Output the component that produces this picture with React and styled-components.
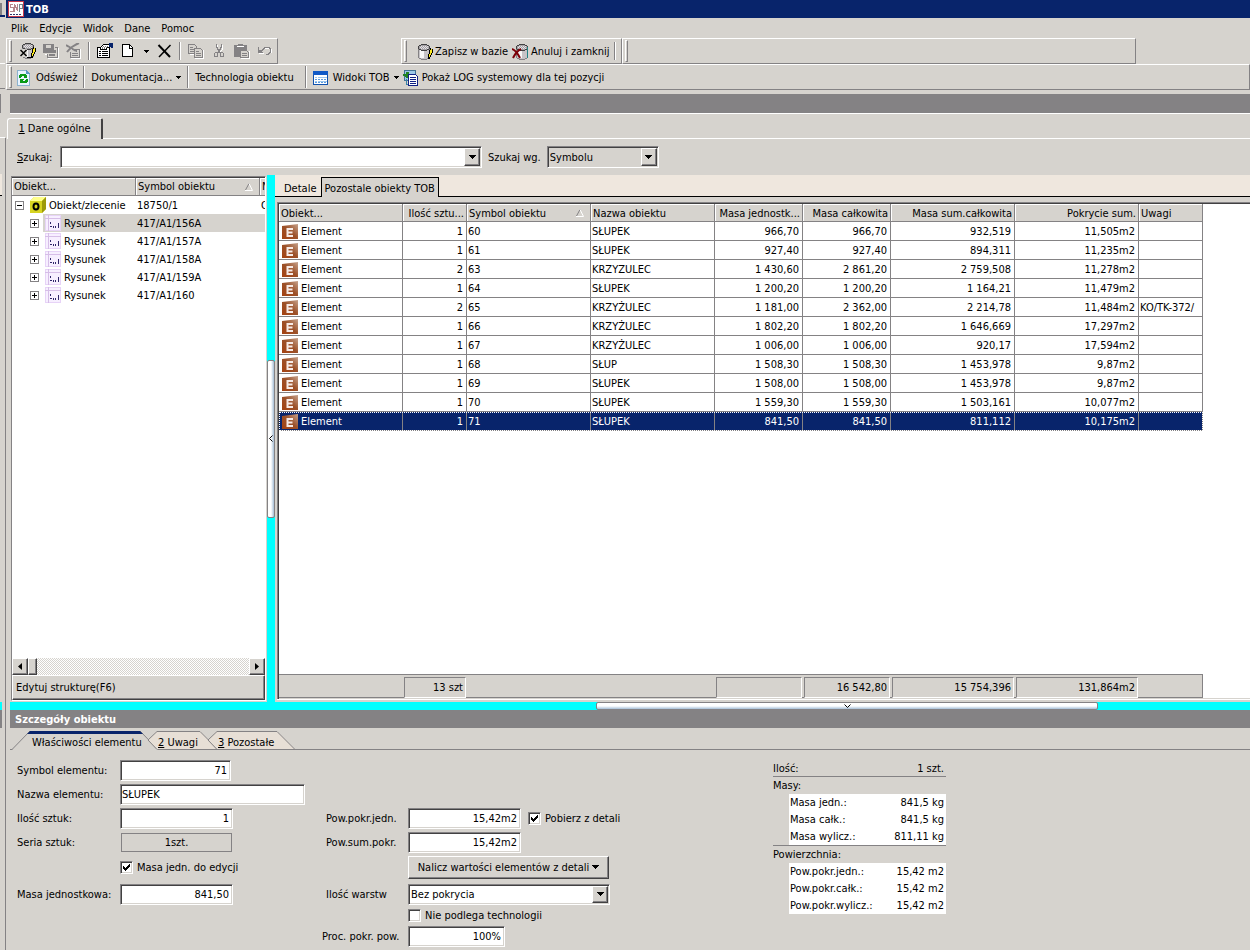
import React from 'react';
import styled, {createGlobalStyle, css} from "styled-components";

const GlobalStyle = createGlobalStyle`
  * {
    box-sizing: border-box;
  }

  body {
    margin: 0;
    background: #d6d3ce;
    overflow: hidden;
  }

  body, button, input, select, table {
    font-family: "DejaVu Sans Condensed", Tahoma, sans-serif;
    font-size: 11px;
    line-height: 17px;
    color: #000;
  }

  button {
    padding: 0;
    border: 0;
    background: none;
    white-space: nowrap;
  }

  svg {
    display: block;
    flex: none;
  }
`;

const sunken = css`
  border: 1px solid;
  border-color: #848284 #fff #fff #848284;
  box-shadow: inset 1px 1px #424142, inset -1px -1px #d6d3ce;
`;

const raised = css`
  border: 1px solid;
  border-color: #fff #424142 #424142 #fff;
  box-shadow: inset -1px -1px #848284;
  background: #d6d3ce;
`;

/* ---------- window ---------- */

const Desktop = styled.div`
  display: flex;
  height: 100vh;
  min-height: 900px;
`;

const BackWindow = styled.div`
  display: flex;
  flex-direction: column;
  flex: none;
  width: 6px;
  background: linear-gradient(#848284, #848284) right 138px / 1px 100% no-repeat;
`;

const BackPart = styled.div`
  height: ${(props) => props.$height}px;
  width: ${(props) => props.$width || 2}px;
  background: ${(props) => props.$color || "transparent"};
  flex: ${(props) => props.$grow ? 1 : "none"};
`;

const Window = styled.div`
  display: flex;
  flex-direction: column;
  flex: 1;
  min-width: 0;
`;

const TitleBar = styled.header`
  display: flex;
  align-items: center;
  gap: 2px;
  height: 18px;
  padding-left: 2px;
  background: #08246b;
  color: #fff;
  font-weight: bold;
`;

const MenuBar = styled.nav`
  display: flex;
  align-items: center;
  gap: 11px;
  height: 20px;
  padding: 1px 0 0 5px;
`;

const ToolRow = styled.div`
  display: flex;
  height: 26px;
`;

const ToolBar = styled.div`
  display: flex;
  align-items: center;
  height: 26px;
  padding-left: 2px;
  margin-left: ${(props) => props.$left || 0}px;
  border: 1px solid;
  border-color: #fff #848284 #848284 #fff;
  flex: ${(props) => props.$grow ? 1 : "none"};
  width: ${(props) => props.$width ? props.$width + "px" : "auto"};
`;

const Grip = styled.span`
  width: 3px;
  height: 22px;
  margin-right: ${(props) => props.$space || 4}px;
  border: 1px solid;
  border-color: #fff #848284 #848284 #fff;
`;

const Separator = styled.span`
  width: 2px;
  height: ${(props) => props.$tall ? 22 : 18}px;
  margin: 0 ${(props) => props.$tall ? 4 : 3}px 0 ${(props) => props.$space || 3}px;
  border-left: 1px solid #848284;
  border-right: 1px solid #fff;
`;

const IconButton = styled.button`
  display: flex;
  align-items: center;
  justify-content: center;
  width: ${(props) => props.$narrow ? 14 : 23}px;
  height: 22px;
`;

const ToolButton = styled.button`
  display: flex;
  align-items: center;
  gap: ${(props) => props.$gap || 3}px;
  height: 23px;
  padding: 1px 2px 0;
`;

const GrayBand = styled.div`
  height: 20px;
  margin: 4px 0 4px 4px;
  background: #848284;
  border-bottom: 1px solid #fff;
`;

const PageTabs = styled.div`
  display: flex;
  height: 21px;

  &::after {
    content: "";
    flex: 1;
    border-bottom: 1px solid #fff;
  }
`;

const PageTab = styled.button`
  width: 96px;
  margin-left: 1px;
  padding-bottom: 2px;
  border-top: 1px solid #fff;
  border-left: 1px solid #fff;
  border-right: 2px solid #424142;
  border-radius: 3px 2px 0 0;
`;

const SearchRow = styled.div`
  display: flex;
  align-items: center;
  gap: 6px;
  height: 36px;
  padding-left: 11px;
`;

const SearchLabel = styled.label`
  min-width: 37px;
`;

const Combo = styled.span`
  ${sunken}
  display: flex;
  position: relative;
  width: ${(props) => props.$width}px;
  height: ${(props) => props.$height || 22}px;
  padding: 1px;
  background: ${(props) => props.$gray ? "#d6d3ce" : "#fff"};

  input, select {
    flex: 1;
    min-width: 0;
    padding: 0 18px 0 1px;
    border: 0;
    background: none;
    outline: 0;
    appearance: none;
  }
`;

/* the arrow lies over the right end of the field */
const ComboArrow = styled.span`
  ${raised}
  position: absolute;
  top: 1px;
  right: 1px;
  bottom: 1px;
  display: flex;
  align-items: center;
  justify-content: center;
  width: 16px;
  pointer-events: none;
`;

/* ---------- tree ---------- */

const Workspace = styled.main`
  display: flex;
  flex: 1;
  min-height: 0;
  margin-left: 5px;
`;

const TreePanel = styled.section`
  display: flex;
  flex-direction: column;
  flex: none;
  width: 255px;
  margin: 1px 1px 1px 0;
  border: 1px solid;
  border-color: #848284 #fff #fff #848284;
  box-shadow: inset 0 1px #424142;
  padding-top: 1px;
`;

const TreeScroll = styled.div`
  flex: 1;
  overflow: hidden;
  background: #fff;
`;

const TreeTable = styled.table`
  width: 100%;
  table-layout: fixed;
  border-collapse: separate;
  border-spacing: 0;

  th {
    height: 18px;
    padding: 0 2px;
    background: #d6d3ce;
    border-bottom: 1px solid #848284;
    border-right: 1px solid #848284;
    box-shadow: inset 1px 1px #fff;
    font-weight: normal;
    text-align: left;
    overflow: hidden;
  }

  th:last-child {
    padding-right: 0;
    border-right: 0;
  }

  td {
    height: 18px;
    padding: 0 1px;
    white-space: nowrap;
    overflow: hidden;
  }
`;

const HeadCell = styled.span`
  display: flex;
  align-items: center;
  justify-content: ${(props) => props.$right ? "flex-end" : "space-between"};
  height: 17px;
  padding-right: ${(props) => props.$sort ? 4 : 0}px;
  white-space: nowrap;
  overflow: hidden;
`;

const TreeNode = styled.span`
  display: flex;
  align-items: center;
  height: 18px;
  padding-left: ${(props) => props.$level ? 17 : 2}px;
`;

const TreeLabel = styled.span`
  display: flex;
  flex: 1;
  align-items: center;
  gap: 3px;
  height: 18px;
  margin: 0 -1px 0 4px;
  padding-left: 2px;
  background: ${(props) => props.$selected ? "#d6d3ce" : "none"};
`;

const TreeRow = styled.tr`
  td + td {
    background: ${(props) => props.$selected ? "#d6d3ce" : "none"};
  }
`;

const ScrollBar = styled.div`
  display: flex;
  height: 17px;
  background: repeating-conic-gradient(#fff 0 25%, #d6d3ce 0 50%) 0 0 / 2px 2px;
`;

const ScrollButton = styled.button`
  ${raised}
  display: flex;
  align-items: center;
  justify-content: center;
  width: ${(props) => props.$thumb ? 9 : 16}px;
  margin-left: ${(props) => props.$end ? "auto" : "0"};
`;

const TreeFooter = styled.button`
  ${raised}
  height: 25px;
  padding-left: 3px;
  text-align: left;
`;

/* ---------- splitters ---------- */

const SplitterV = styled.div`
  display: flex;
  align-items: center;
  flex: none;
  width: 8px;
  background: #0ff;
`;

const SplitterH = styled.div`
  display: flex;
  flex: none;
  height: 8px;
  margin-left: 4px;
  padding-left: 586px;
  background: #0ff;
`;

const SplitHandle = styled.button`
  display: flex;
  align-items: center;
  justify-content: center;
  width: ${(props) => props.$flat ? 502 : 8}px;
  height: ${(props) => props.$flat ? 8 : 158}px;
  border: 1px solid #848284;
  border-radius: 2px;
  background: linear-gradient(${(props) => props.$flat ? "to bottom" : "to right"}, #fff 50%, #a5bed6);
`;

/* ---------- objects grid ---------- */

const ObjectsPanel = styled.section`
  display: flex;
  flex-direction: column;
  flex: 1;
  min-width: 0;
`;

const StripTabs = styled.div`
  display: flex;
  height: 22px;
  padding-top: 2px;
  background: linear-gradient(#000, #000) bottom / 100% 1px no-repeat #efe7de;
`;

const StripTab = styled.button`
  padding: ${(props) => props.$active ? "1px 3px 0" : "2px 4px 0 9px"};
  border: solid #000;
  border-width: ${(props) => props.$active ? "1px 1px 0" : "0"};
  background: ${(props) => props.$active ? "#d6d3ce" : "none"};
`;

const GridPanel = styled.div`
  display: flex;
  flex-direction: column;
  flex: 1;
  min-height: 0;
  margin: 5px 0 3px 2px;
  border: solid #848284;
  border-width: 1px 0 0 1px;
  box-shadow: inset 1px 1px #424142, 0 1px #fff;
  padding: 1px 0 1px 1px;
`;

const GridScroll = styled.div`
  flex: 1;
  overflow: hidden;
  background: #fff;
`;

const GridTable = styled.table`
  width: 924px;
  table-layout: fixed;
  border-collapse: separate;
  border-spacing: 0;

  th {
    height: 18px;
    padding: 0 2px;
    background: #d6d3ce;
    border-right: 1px solid #848284;
    border-bottom: 1px solid #848284;
    box-shadow: inset 1px 1px #fff;
    font-weight: normal;
  }

  th span {
    padding-top: 1px;
  }

  td {
    height: 19px;
    padding: 1px 3px 0 1px;
    border-right: 1px solid #848284;
    border-bottom: 1px solid #848284;
    white-space: nowrap;
    overflow: hidden;
  }
`;

const GridRow = styled.tr`
  background: ${(props) => props.$selected ? "#08246b" : "#fff"};
  color: ${(props) => props.$selected ? "#fff" : "#000"};
  outline: ${(props) => props.$selected ? "1px dotted #fff" : "0"};
  outline-offset: -1px;
`;

const GridCell = styled.td`
  text-align: ${(props) => props.$right ? "right" : "left"};
`;

const Kind = styled.span`
  display: flex;
  align-items: center;
  gap: 3px;
  padding-left: 2px;
`;

const GridFooter = styled.div`
  display: grid;
  grid-template-columns: 124px 64px 124px 124px 88px 88px 124px 124px 63px;
  align-self: flex-start;
  height: 24px;
  padding: 2px 0;
  border: solid #848284;
  border-width: 1px 1px 1px 0;
  background: #d6d3ce;
  box-shadow: 60px 0 #fff;
`;

const FooterCell = styled.span`
  margin: 0 1px;
  padding: 0 2px;
  text-align: right;
  line-height: 19px;
  border: 1px solid;
  border-color: ${(props) => props.$on ? "#848284 #fff #fff #848284" : "transparent"};
`;

/* ---------- details ---------- */

const SectionTitle = styled.h2`
  height: 18px;
  margin: 0 0 2px 4px;
  padding: 1px 0 0 5px;
  background: #848284;
  color: #fff;
  font-size: 11px;
`;

const DetailTabs = styled.div`
  display: flex;
  height: 20px;
  margin-left: 4px;
  padding-left: 2px;
  background: linear-gradient(#848284, #848284) bottom / 100% 1px no-repeat;
`;

const DetailTab = styled.button`
  position: relative;
  width: ${(props) => props.$width}px;
  padding: 4px 0 0 ${(props) => props.$active ? 20 : 10}px;
  margin-right: -10px;
  text-align: left;

  svg {
    position: absolute;
    left: 0;
    top: 0;
  }

  span {
    position: relative;
  }
`;

const Form = styled.form`
  display: grid;
  grid-template-columns: 305px 451px 173px;
  align-items: start;
  height: 200px;
  padding: 8px 0 0 11px;
`;

const Fields = styled.div`
  display: grid;
  grid-template-columns: ${(props) => props.$middle ? "86px auto" : "103px auto"};
  grid-template-rows: 24px 24px 24px 24px 26px 28px 14px 28px;
  align-items: center;
`;

const Label = styled.label`
  grid-column: 1;
  grid-row: ${(props) => props.$row};
  padding-left: ${(props) => props.$indent ? 4 : 0}px;
  white-space: nowrap;
`;

const Field = styled.div`
  grid-column: 2;
  grid-row: ${(props) => props.$row};
  display: flex;
  align-items: center;
  gap: 7px;
`;

const TextBox = styled.input`
  ${sunken}
  width: ${(props) => props.$width}px;
  height: 21px;
  padding: 0 3px 0 1px;
  background: #fff;
  text-align: ${(props) => props.$left ? "left" : "right"};
  outline: 0;
`;

const SeriesButton = styled.button`
  width: 111px;
  height: 19px;
  margin-left: 1px;
  border: 1px solid #848284;
`;

const CheckLabel = styled.label`
  display: flex;
  align-items: center;
  gap: 4px;
  white-space: nowrap;

  input {
    ${sunken}
    appearance: none;
    width: 13px;
    height: 13px;
    margin: 0;
    background: #fff;
  }

  input:checked {
    background: url("data:image/svg+xml,%3Csvg xmlns='http://www.w3.org/2000/svg' width='11' height='11' shape-rendering='crispEdges'%3E%3Cpath d='M2 4h1v1h1v1h1v-1h1v-1h1v-1h1v-1h1v3h-1v1h-1v1h-1v1h-1v1h-1v-1h-1v-1h-1z'/%3E%3C/svg%3E") #fff;
  }
`;

const CalcButton = styled.button`
  ${raised}
  display: flex;
  align-items: center;
  justify-content: center;
  gap: 3px;
  width: 201px;
  height: 23px;
`;

const Summary = styled.div`
  padding-top: 2px;
`;

const SummaryTitle = styled.div`
  display: flex;
  justify-content: space-between;
  height: 17px;
  padding: 0 2px 0 0;
  border-bottom: ${(props) => props.$line ? "1px solid #848284" : "0"};
`;

const SummaryBlock = styled.div`
  border-bottom: ${(props) => props.$line ? "1px solid #848284" : "0"};
`;

const SummaryTable = styled.table`
  width: 157px;
  margin-left: 16px;
  border-spacing: 0;
  background: #fff;

  th, td {
    height: 17px;
    padding: 0 2px 0 1px;
    font-weight: normal;
    text-align: left;
    white-space: nowrap;
  }

  td {
    text-align: right;
  }
`;

/* ---------- icons ---------- */

const Icon = ({children, size = 16}) => (
    <svg width={size} height={size} viewBox="0 0 16 16" fill="none" shapeRendering="crispEdges">{children}</svg>
);

const Down = () => <svg width="5" height="3" shapeRendering="crispEdges"><path d="M0 0h5v1H0zM1 1h3v1H1zM2 2h1v1H2z"/></svg>;
const ComboDown = () => <svg width="7" height="4" shapeRendering="crispEdges"><path d="M0 0h7v1H0zM1 1h5v1H1zM2 2h3v1H2zM3 3h1v1H3z"/></svg>;
const SortMark = () => <svg width="8" height="8"><path d="M.5 7 4 .5" stroke="#848284"/><path d="M4 .5 7.5 7.5H0" stroke="#fff" fill="none"/></svg>;

const LogoIcon = () => (
    <Icon>
        <path fill="#fff" stroke="#c6384a" d="M.5.5h15v15H.5z"/>
        <path stroke="#b5868c" d="M5 3H2v3h3v4H2M6.5 11V3l3 7V3"/>
        <path stroke="#73868c" d="M11.5 11V3H14v4h-3"/>
        <path stroke="#31386b" strokeDasharray="2 1" d="M2 13.5h12"/>
    </Icon>
);

const Barrel = ({x = 0}) => (
    <g transform={`translate(${x} 0)`}>
        <path fill="#c6c3c6" d="M2 5h10v9h-1v1H3v-1H2z"/>
        <path fill="#f7f7f7" d="M3 6h4v8H3z"/>
        <path fill="#a5a2a5" d="M3 1h8v1h1v3h-1v1H3V5H2V2h1z"/>
        <path stroke="#e7e3e7" strokeDasharray="1 1" d="M4 2.5h7M3 3.5h8M4 4.5h7"/>
        <path stroke="#424142" d="M4 .5h6M2 1.5h2M10 1.5h2M1.5 2v3M12.5 2v3M2 5.5h2M10 5.5h2M4 6.5h6"/>
        <path stroke="#848284" d="M1.5 5v9M12.5 5v9M2 14.5h2M10 14.5h2M4 15.5h6"/>
    </g>
);

const Pencil = () => (
    <>
        <path stroke="#000" d="M13.5 4v2M15.5 5v4M14.5 9v2M13.5 11v2M12.5 13v2M11.5 10v5M12.5 6v4"/>
        <path stroke="#ffeb21" d="M14.5 5v4M13.5 6v5M12.5 10v3"/>
    </>
);

const SaveBaseIcon = () => <Icon><Barrel/><Pencil/></Icon>;
const EditBaseIcon = () => (
    <Icon>
        <Barrel x={1}/><Pencil/>
        <path fill="#d6d3ce" d="M0 6h7v8H0z"/>
        <path stroke="#000" strokeWidth="1.5" shapeRendering="auto" d="M.5 7l6 6M6.5 7l-6 6"/>
        <path stroke="#000" d="M7 14.5h5"/>
    </Icon>
);
const CancelIcon = () => (
    <Icon>
        <Barrel x={3}/>
        <path stroke="#218284" d="M15.5 3v11"/>
        <path stroke="#7b0008" strokeWidth="2" shapeRendering="auto" d="M0 5c3 1 6 5 8 9M9 5c-4 2-6 5-8 9"/>
    </Icon>
);
const SaveAllIcon = () => (
    <Icon>
        <path stroke="#fff" d="M5 15.5h10.5V5M2 11.5h3"/>
        <path fill="#848284" d="M0 1h11v9H0z"/>
        <path fill="#d6d3ce" d="M3 2h5v3H3z"/>
        <path stroke="#848284" d="M12 4.5h2.5v10H4.5V11"/>
        <path fill="#848284" d="M6 11h6v2H6zM11 7h2v3h-2z"/>
    </Icon>
);
const SaveDeleteIcon = () => (
    <Icon>
        <path stroke="#fff" d="M5 15.5h9.5V6M1 3l5 4"/>
        <path stroke="#848284" strokeWidth="2" shapeRendering="auto" d="M0 2l10 6M13 0C8 2 4 5 1 9"/>
        <path stroke="#848284" d="M8 6.5h5.5v8h-9V9M6 10.5h6M6 12.5h6M10.5 6v3"/>
    </Icon>
);
const PropsIcon = () => (
    <Icon>
        <path fill="#fff" stroke="#000" d="M.5 4.5h12v10H.5z"/>
        <path stroke="#000" d="M2 8.5h2M5 8.5h6M2 10.5h2M5 10.5h6M2 12.5h2M5 12.5h6"/>
        <path fill="#fff" stroke="#000" d="M3.5 6.5v-2l3-3h6v3h-3v2z"/>
        <path stroke="#848284" strokeDasharray="1 1" d="M5 4.5h5M6 3.5h5M5 5.5h4"/>
        <path fill="#08246b" d="M12 0h4v5h-2V4h-2z"/>
    </Icon>
);
const PageIcon = () => (
    <Icon>
        <path fill="#fff" stroke="#000" d="M2.5 1.5h7l3 3v9h-10z"/>
        <path stroke="#000" d="M9.5 2v3H12"/>
    </Icon>
);
const DeleteIcon = () => (
    <Icon>
        <path stroke="#000" strokeWidth="2" shapeRendering="auto" d="M1.5 2l11.5 12"/>
        <path stroke="#000" strokeWidth="1.5" shapeRendering="auto" d="M13.5 2L2 14"/>
    </Icon>
);
const CopyIcon = () => (
    <Icon>
        <path stroke="#fff" d="M2 11.5h5M7 15.5h8.5V7"/>
        <path fill="#d6d3ce" stroke="#848284" d="M.5 1.5h6l2 2v7h-8zM2 4.5h3M2 6.5h4M2 8.5h4"/>
        <path fill="#d6d3ce" stroke="#848284" d="M6.5 5.5h6l2 2v7h-8zM8 8.5h3M8 10.5h5M8 12.5h5"/>
    </Icon>
);
const CutIcon = () => (
    <Icon>
        <path stroke="#fff" d="M6.5 2v4l2 3M11.5 2v4l-2 3"/>
        <path stroke="#848284" d="M5.5 1v3h1v2h1v3h1v1M10.5 1v3h-1v2h-1v3M4.5 9.5h2v4h-3v-3zM9.5 9.5h2l1 1v3h-3z"/>
    </Icon>
);
const PasteIcon = () => (
    <Icon>
        <path fill="#848284" d="M0 2h4V1h5v1h4v12H0z"/>
        <path stroke="#fff" d="M3 3.5h7M7 15.5h8.5V8"/>
        <path fill="#d6d3ce" stroke="#848284" d="M6.5 7.5h6l2 2v5h-8zM8 10.5h5M8 12.5h5"/>
    </Icon>
);
const UndoIcon = () => (
    <Icon>
        <path stroke="#fff" d="M2 10.5h5M8 5.5h5M14.5 6v4"/>
        <path stroke="#848284" d="M1.5 4v5H6M2 8.5h2v-1h1v-1h1v-1h1v-1h5v1h1v4h-1v1h-1v1h-2"/>
        <path fill="#848284" d="M1 7h3v3H1z"/>
    </Icon>
);
const RefreshIcon = () => (
    <Icon>
        <path fill="#e7f3ff" stroke="#8cb2ce" d="M.5.5h9l3 3v12h-12z"/>
        <path fill="#5a96c6" d="M9 0l4 4H9z"/>
        <path stroke="#089a18" strokeWidth="2" d="M3 8V6h1V5h4v1h1M10 9v2H9v1H5v-1H4"/>
        <path fill="#089a18" d="M10 4v4H6zM3 13V9h4z"/>
    </Icon>
);
const ViewsIcon = () => (
    <Icon>
        <path fill="#fff" stroke="#1051ad" d="M.5 1.5h14v13H.5z"/>
        <path fill="#1059c6" d="M0 1h15v4H0z"/>
        <path stroke="#9cc7ef" d="M2 7.5h2M5 7.5h9M2 11.5h2M5 11.5h9"/>
        <path stroke="#5a9ade" strokeDasharray="2 1" d="M2 9.5h12M2 12.5h12"/>
    </Icon>
);
const LogIcon = () => (
    <Icon>
        <path fill="#9cc7e7" stroke="#427194" d="M1.5.5h11v10h-11z"/>
        <path fill="#218221" d="M0 4h3V2h3v2h2v1H7v1H6v1H5v1H3V7H2V6H0z"/>
        <path stroke="#3982a5" d="M3.5 9v5H5"/>
        <path fill="#fff" stroke="#102084" d="M5.5 4.5h7l2 2v9h-9z"/>
        <path stroke="#102084" d="M7 7.5h6M7 9.5h6M7 11.5h6M7 13.5h6"/>
    </Icon>
);
const OrderIcon = () => (
    <svg width="16" height="16" viewBox="0 0 16 16">
        <path fill="#d6d321" d="M0 4 4 0h12v12l-4 4H0z"/>
        <path fill="#ffff8c" d="M0 4 4 0h12l-4 4z"/>
        <path fill="#9c9a08" d="M12 4l4-4v12l-4 4z"/>
        <ellipse cx="6" cy="9.5" rx="2.5" ry="3" fill="none" stroke="#000" strokeWidth="2"/>
    </svg>
);
const DrawingIcon = () => (
    <Icon>
        <path fill="#f7efff" stroke="#e7d3f7" d="M.5.5h15v15H.5z"/>
        <path stroke="#d6bee7" d="M3.5 0v16M0 3.5h16"/>
        <path fill="#31286b" d="M5 7h1v2H5zM5 11h2v1H5zM8 11h1v2H8zM10 11h1v2h-1zM13 8h1v5h-1z"/>
    </Icon>
);
const ElementIcon = () => (
    <svg width="16" height="16" viewBox="0 0 16 16">
        <defs>
            <linearGradient id="brown" x1="0" y1="1" x2="1" y2="0">
                <stop offset="0" stopColor="#a54110"/>
                <stop offset=".5" stopColor="#9c5129"/>
                <stop offset="1" stopColor="#c6a28c"/>
            </linearGradient>
        </defs>
        <path fill="url(#brown)" d="M0 2 16 0v15H0z"/>
        <path fill="none" stroke="#f7ebe7" strokeWidth="2" d="M11 5H5.5v7H11M6 8.5h4.5"/>
    </svg>
);
const Expander = ({open}) => (
    <svg width="9" height="9" shapeRendering="crispEdges">
        <path fill="#fff" stroke="#848284" d="M.5.5h8v8h-8z"/>
        <path stroke="#000" d={open ? "M2 4.5h5" : "M2 4.5h5M4.5 2v5"}/>
    </svg>
);

/* ---------- data ---------- */

const drawings = ["417/A1/156A", "417/A1/157A", "417/A1/158A", "417/A1/159A", "417/A1/160"];

const columns = [
    {name: "Obiekt...", width: 124},
    {name: "Ilość sztu...", width: 64, right: true},
    {name: "Symbol obiektu", width: 124, sort: true},
    {name: "Nazwa obiektu", width: 124},
    {name: "Masa jednostk...", width: 88, right: true},
    {name: "Masa całkowita", width: 88, right: true},
    {name: "Masa sum.całkowita", width: 124, right: true},
    {name: "Pokrycie sum.", width: 124, right: true},
    {name: "Uwagi", width: 64},
];

const rows = [
    ["1", "60", "SŁUPEK", "966,70", "966,70", "932,519", "11,505m2", ""],
    ["1", "61", "SŁUPEK", "927,40", "927,40", "894,311", "11,235m2", ""],
    ["2", "63", "KRZYZULEC", "1 430,60", "2 861,20", "2 759,508", "11,278m2", ""],
    ["1", "64", "SŁUPEK", "1 200,20", "1 200,20", "1 164,21", "11,479m2", ""],
    ["2", "65", "KRZYŻULEC", "1 181,00", "2 362,00", "2 214,78", "11,484m2", "KO/TK-372/"],
    ["1", "66", "KRZYŻULEC", "1 802,20", "1 802,20", "1 646,669", "17,297m2", ""],
    ["1", "67", "KRZYŻULEC", "1 006,00", "1 006,00", "920,17", "17,594m2", ""],
    ["1", "68", "SŁUP", "1 508,30", "1 508,30", "1 453,978", "9,87m2", ""],
    ["1", "69", "SŁUPEK", "1 508,00", "1 508,00", "1 453,978", "9,87m2", ""],
    ["1", "70", "SŁUPEK", "1 559,30", "1 559,30", "1 503,161", "10,077m2", ""],
    ["1", "71", "SŁUPEK", "841,50", "841,50", "811,112", "10,175m2", ""],
];

const totals = [null, "13 szt", null, null, "", "16 542,80", "15 754,396", "131,864m2", null];

const masses = [["Masa jedn.:", "841,5 kg"], ["Masa całk.:", "841,5 kg"], ["Masa wylicz.:", "811,11 kg"]];
const areas = [["Pow.pokr.jedn.:", "15,42 m2"], ["Pow.pokr.całk.:", "15,42 m2"], ["Pow.pokr.wylicz.:", "15,42 m2"]];

/* ---------- parts ---------- */

const Toolbars = () => (
    <>
        <ToolRow>
            <ToolBar $width={272}>
                <Grip/>
                <IconButton aria-label="Edytuj"><EditBaseIcon/></IconButton>
                <IconButton aria-label="Zapisz"><SaveAllIcon/></IconButton>
                <IconButton aria-label="Anuluj"><SaveDeleteIcon/></IconButton>
                <Separator/>
                <IconButton aria-label="Właściwości"><PropsIcon/></IconButton>
                <IconButton aria-label="Nowy"><PageIcon/></IconButton>
                <IconButton aria-label="Nowy z listy" $narrow><Down/></IconButton>
                <IconButton aria-label="Usuń"><DeleteIcon/></IconButton>
                <Separator/>
                <IconButton aria-label="Kopiuj"><CopyIcon/></IconButton>
                <IconButton aria-label="Wytnij"><CutIcon/></IconButton>
                <IconButton aria-label="Wklej"><PasteIcon/></IconButton>
                <IconButton aria-label="Cofnij"><UndoIcon/></IconButton>
            </ToolBar>
            <ToolBar $left={123} $width={221}>
                <Grip $space={8}/>
                <ToolButton $gap={2}><SaveBaseIcon/>Zapisz w bazie</ToolButton>
                <ToolButton $gap={3}><CancelIcon/>Anuluj i zamknij</ToolButton>
                <Separator $space={2}/>
            </ToolBar>
            <ToolBar $width={514}>
                <Grip/>
            </ToolBar>
        </ToolRow>
        <ToolRow>
            <ToolBar $grow>
                <Grip $space={3}/>
                <ToolButton><RefreshIcon/>Odśwież</ToolButton>
                <Separator $tall $space={4}/>
                <ToolButton $gap={4}>Dokumentacja...<Down/></ToolButton>
                <Separator $tall $space={4}/>
                <ToolButton>Technologia obiektu</ToolButton>
                <Separator $tall $space={9}/>
                <ToolButton $gap={4}><ViewsIcon/>Widoki TOB<Down/></ToolButton>
                <ToolButton $gap={3}><LogIcon/>Pokaż LOG systemowy dla tej pozycji</ToolButton>
            </ToolBar>
        </ToolRow>
    </>
);

const Tree = () => (
    <TreePanel>
        <TreeScroll>
            <TreeTable>
                <colgroup>
                    <col width="124"/>
                    <col width="124"/>
                    <col/>
                </colgroup>
                <thead>
                    <tr>
                        <th><HeadCell>Obiekt...</HeadCell></th>
                        <th><HeadCell $sort>Symbol obiektu<SortMark/></HeadCell></th>
                        <th><HeadCell>N</HeadCell></th>
                    </tr>
                </thead>
                <tbody>
                    <TreeRow>
                        <td><TreeNode><Expander open/><TreeLabel><OrderIcon/>Obiekt/zlecenie</TreeLabel></TreeNode></td>
                        <td>18750/1</td>
                        <td>O</td>
                    </TreeRow>
                    {drawings.map((symbol, i) => (
                        <TreeRow key={symbol} $selected={i === 0}>
                            <td>
                                <TreeNode $level={1}>
                                    <Expander/>
                                    <TreeLabel $selected={i === 0}><DrawingIcon/>Rysunek</TreeLabel>
                                </TreeNode>
                            </td>
                            <td>{symbol}</td>
                            <td></td>
                        </TreeRow>
                    ))}
                </tbody>
            </TreeTable>
        </TreeScroll>
        <ScrollBar>
            <ScrollButton aria-label="W lewo"><svg width="4" height="7"><path d="M4 0v7L0 3.5z"/></svg></ScrollButton>
            <ScrollButton aria-label="Suwak" $thumb/>
            <ScrollButton aria-label="W prawo" $end><svg width="4" height="7"><path d="M0 0v7l4-3.5z"/></svg></ScrollButton>
        </ScrollBar>
        <TreeFooter>Edytuj strukturę(F6)</TreeFooter>
    </TreePanel>
);

const Objects = () => (
    <ObjectsPanel>
        <StripTabs>
            <StripTab>Detale</StripTab>
            <StripTab $active>Pozostale obiekty TOB</StripTab>
        </StripTabs>
        <GridPanel>
            <GridScroll>
                <GridTable>
                    <colgroup>{columns.map((c) => <col key={c.name} width={c.width}/>)}</colgroup>
                    <thead>
                        <tr>
                            {columns.map((c) => (
                                <th key={c.name}>
                                    <HeadCell $right={c.right} $sort={c.sort}>{c.name}{c.sort && <SortMark/>}</HeadCell>
                                </th>
                            ))}
                        </tr>
                    </thead>
                    <tbody>
                        {rows.map((row) => (
                            <GridRow key={row[1]} $selected={row[1] === "71"}>
                                <td><Kind><ElementIcon/>Element</Kind></td>
                                {row.map((value, i) => (
                                    <GridCell key={i} $right={columns[i + 1].right}>{value}</GridCell>
                                ))}
                            </GridRow>
                        ))}
                    </tbody>
                </GridTable>
            </GridScroll>
            <GridFooter>
                {totals.map((value, i) => <FooterCell key={i} $on={value !== null}>{value}</FooterCell>)}
            </GridFooter>
        </GridPanel>
    </ObjectsPanel>
);

const SlantTab = ({width, active, children}) => (
    <DetailTab type="button" $width={width} $active={active}>
        <svg width={width} height="20">
            {active ? (
                <>
                    <path fill="#d6d3ce" d={`M0 20 18 1h${width - 36}l18 19z`}/>
                    <path fill="none" stroke="#848284" d={`M0 19.5 18 1M${width - 18} 1l18 18.5`}/>
                    <path fill="#08246b" d={`M15 4l3-3h${width - 36}l3 3z`}/>
                </>
            ) : (
                <>
                    <path fill="#e7dfd6" d={`M0 10 9 1h${width - 27}l18 18H9z`}/>
                    <path fill="none" stroke="#848284" d={`M9 19.5 0 10l9-8.5h${width - 27}l18 18`}/>
                </>
            )}
        </svg>
        <span>{children}</span>
    </DetailTab>
);

const SummaryRows = ({items}) => (
    <SummaryTable>
        <tbody>
            {items.map(([name, value]) => <tr key={name}><th>{name}</th><td>{value}</td></tr>)}
        </tbody>
    </SummaryTable>
);

const Details = () => (
    <Form onSubmit={(e) => e.preventDefault()}>
        <Fields>
            <Label $row={1} htmlFor="symbol">Symbol elementu:</Label>
            <Field $row={1}><TextBox id="symbol" $width={111} defaultValue="71"/></Field>
            <Label $row={2} htmlFor="name">Nazwa elementu:</Label>
            <Field $row={2}><TextBox id="name" $width={185} $left defaultValue="SŁUPEK"/></Field>
            <Label $row={3} htmlFor="count">Ilość sztuk:</Label>
            <Field $row={3}><TextBox id="count" $width={113} defaultValue="1"/></Field>
            <Label $row={4} htmlFor="series">Seria sztuk:</Label>
            <Field $row={4}><SeriesButton id="series" type="button">1szt.</SeriesButton></Field>
            <Field $row={5}>
                <CheckLabel><input type="checkbox" defaultChecked/>Masa jedn. do edycji</CheckLabel>
            </Field>
            <Label $row={6} htmlFor="mass">Masa jednostkowa:</Label>
            <Field $row={6}><TextBox id="mass" $width={113} defaultValue="841,50"/></Field>
        </Fields>
        <Fields $middle>
            <Label $row={3} $indent htmlFor="area">Pow.pokr.jedn.</Label>
            <Field $row={3}>
                <TextBox id="area" $width={113} defaultValue="15,42m2"/>
                <CheckLabel><input type="checkbox" defaultChecked/>Pobierz z detali</CheckLabel>
            </Field>
            <Label $row={4} $indent htmlFor="areaSum">Pow.sum.pokr.</Label>
            <Field $row={4}><TextBox id="areaSum" $width={113} defaultValue="15,42m2"/></Field>
            <Field $row={5}><CalcButton type="button">Nalicz wartości elementów z detali<ComboDown/></CalcButton></Field>
            <Label $row={6} $indent htmlFor="layers">Ilość warstw</Label>
            <Field $row={6}>
                <Combo $width={202} $height={21}>
                    <select id="layers"><option>Bez pokrycia</option></select>
                    <ComboArrow><ComboDown/></ComboArrow>
                </Combo>
            </Field>
            <Field $row={7}><CheckLabel><input type="checkbox"/>Nie podlega technologii</CheckLabel></Field>
            <Label $row={8} htmlFor="percent">Proc. pokr. pow.</Label>
            <Field $row={8}><TextBox id="percent" $width={97} defaultValue="100%"/></Field>
        </Fields>
        <Summary>
            <SummaryTitle $line><span>Ilość:</span><span>1 szt.</span></SummaryTitle>
            <SummaryTitle>Masy:</SummaryTitle>
            <SummaryBlock $line><SummaryRows items={masses}/></SummaryBlock>
            <SummaryTitle>Powierzchnia:</SummaryTitle>
            <SummaryBlock><SummaryRows items={areas}/></SummaryBlock>
        </Summary>
    </Form>
);

const App = () => {
    return (
        <>
            <GlobalStyle/>
            <Desktop>
                <BackWindow>
                    <BackPart $height={3}/>
                    <BackPart $height={12} $color="#848284"/>
                    <BackPart $height={2} $width={5} $color="#08246b"/>
                    <BackPart $height={46}/>
                    <BackPart $height={1} $width={5} $color="#fff"/>
                    <BackPart $height={24}/>
                    <BackPart $height={1} $width={5} $color="#848284"/>
                    <BackPart $height={5}/>
                    <BackPart $height={19} $width={1} $color="#848284"/>
                    <BackPart $height={24}/>
                    <BackPart $height={1} $width={5} $color="#fff"/>
                    <BackPart $height={36}/>
                    <BackPart $height={21} $color="#efe7de"/>
                    <BackPart $height={1} $color="#000"/>
                    <BackPart $grow/>
                    <BackPart $height={8} $color="#0ff"/>
                    <BackPart $height={18} $color="#848284"/>
                    <BackPart $height={222}/>
                </BackWindow>
                <Window>
                    <TitleBar><LogoIcon/>TOB</TitleBar>
                    <MenuBar>
                        <button>Plik</button>
                        <button>Edycje</button>
                        <button>Widok</button>
                        <button>Dane</button>
                        <button>Pomoc</button>
                    </MenuBar>
                    <Toolbars/>
                    <GrayBand/>
                    <PageTabs>
                        <PageTab><u>1</u> Dane ogólne</PageTab>
                    </PageTabs>
                    <SearchRow>
                        <SearchLabel htmlFor="search"><u>S</u>zukaj:</SearchLabel>
                        <Combo $width={422}>
                            <input id="search"/>
                            <ComboArrow><ComboDown/></ComboArrow>
                        </Combo>
                        <SearchLabel htmlFor="searchBy">Szukaj wg.</SearchLabel>
                        <Combo $width={112} $gray>
                            <select id="searchBy"><option>Symbolu</option></select>
                            <ComboArrow><ComboDown/></ComboArrow>
                        </Combo>
                    </SearchRow>
                    <Workspace>
                        <Tree/>
                        <SplitterV>
                            <SplitHandle aria-label="Zwiń drzewo">
                                <svg width="4" height="7"><path d="M3.5.5l-3 3 3 3" fill="none" stroke="#000"/></svg>
                            </SplitHandle>
                        </SplitterV>
                        <Objects/>
                    </Workspace>
                    <SplitterH>
                        <SplitHandle $flat aria-label="Zwiń szczegóły">
                            <svg width="7" height="4"><path d="M.5.5l3 3 3-3" fill="none" stroke="#000"/></svg>
                        </SplitHandle>
                    </SplitterH>
                    <SectionTitle>Szczegóły obiektu</SectionTitle>
                    <DetailTabs>
                        <SlantTab width={146} active>Właściwości elementu</SlantTab>
                        <SlantTab width={70}><u>2</u> Uwagi</SlantTab>
                        <SlantTab width={87}><u>3</u> Pozostałe</SlantTab>
                    </DetailTabs>
                    <Details/>
                </Window>
            </Desktop>
        </>
    )
}

export default App;
